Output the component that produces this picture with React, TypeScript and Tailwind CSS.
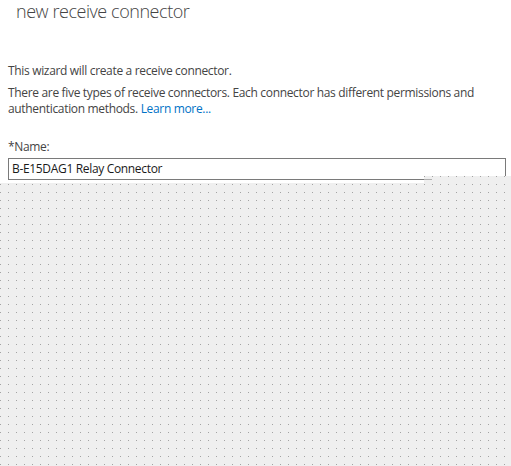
import React from "react";

const font = { fontFamily: '"Segoe UI", "Open Sans", "Noto Sans", sans-serif' };

export default function App() {
  return (
    <div className="relative w-[511px] h-[466px] bg-white overflow-hidden flex flex-col" style={font}>
      <div className="px-[16px] text-[18px] leading-[22px] font-light text-[#444444] tracking-[-0.45px]">
        new receive connector
      </div>
      <div className="px-[8px] text-[12px] leading-[16px] text-[#444444] tracking-[-0.33px]">
        <p className="mt-[41px]">This wizard will create a receive connector.</p>
        <p className="mt-[6px]">
          There are five types of receive connectors. Each connector has different permissions and authentication methods.{" "}
          <span className="text-[#0072c6]">Learn more...</span>
        </p>
        <div className="mt-[22px]">*Name:</div>
        <div className="mt-[3px] h-[22px] border border-[#7a7a7a] pl-[3px] text-[#1a1a1a] leading-[20px] w-[498px]">
          B-E15DAG1 Relay Connector
        </div>
      </div>
      <div className="mt-[3px] flex-1 bg-fixed bg-[#a3a3a3] bg-[linear-gradient(to_right,#efefef_7px,transparent_7px),linear-gradient(to_bottom,#efefef_7px,transparent_7px)] bg-[length:8px_8px] bg-[position:1px_1px]" />
      <div className="absolute left-[424px] top-[176px] w-[87px] h-[7px] bg-fixed bg-[#a3a3a3] bg-[linear-gradient(to_right,#efefef_7px,transparent_7px),linear-gradient(to_bottom,#efefef_7px,transparent_7px)] bg-[length:8px_8px] bg-[position:1px_1px]" />
      <div className="absolute left-[424px] top-[179px] w-[8px] h-[1px] bg-[#b0b0b0]" />
    </div>
  );
}
